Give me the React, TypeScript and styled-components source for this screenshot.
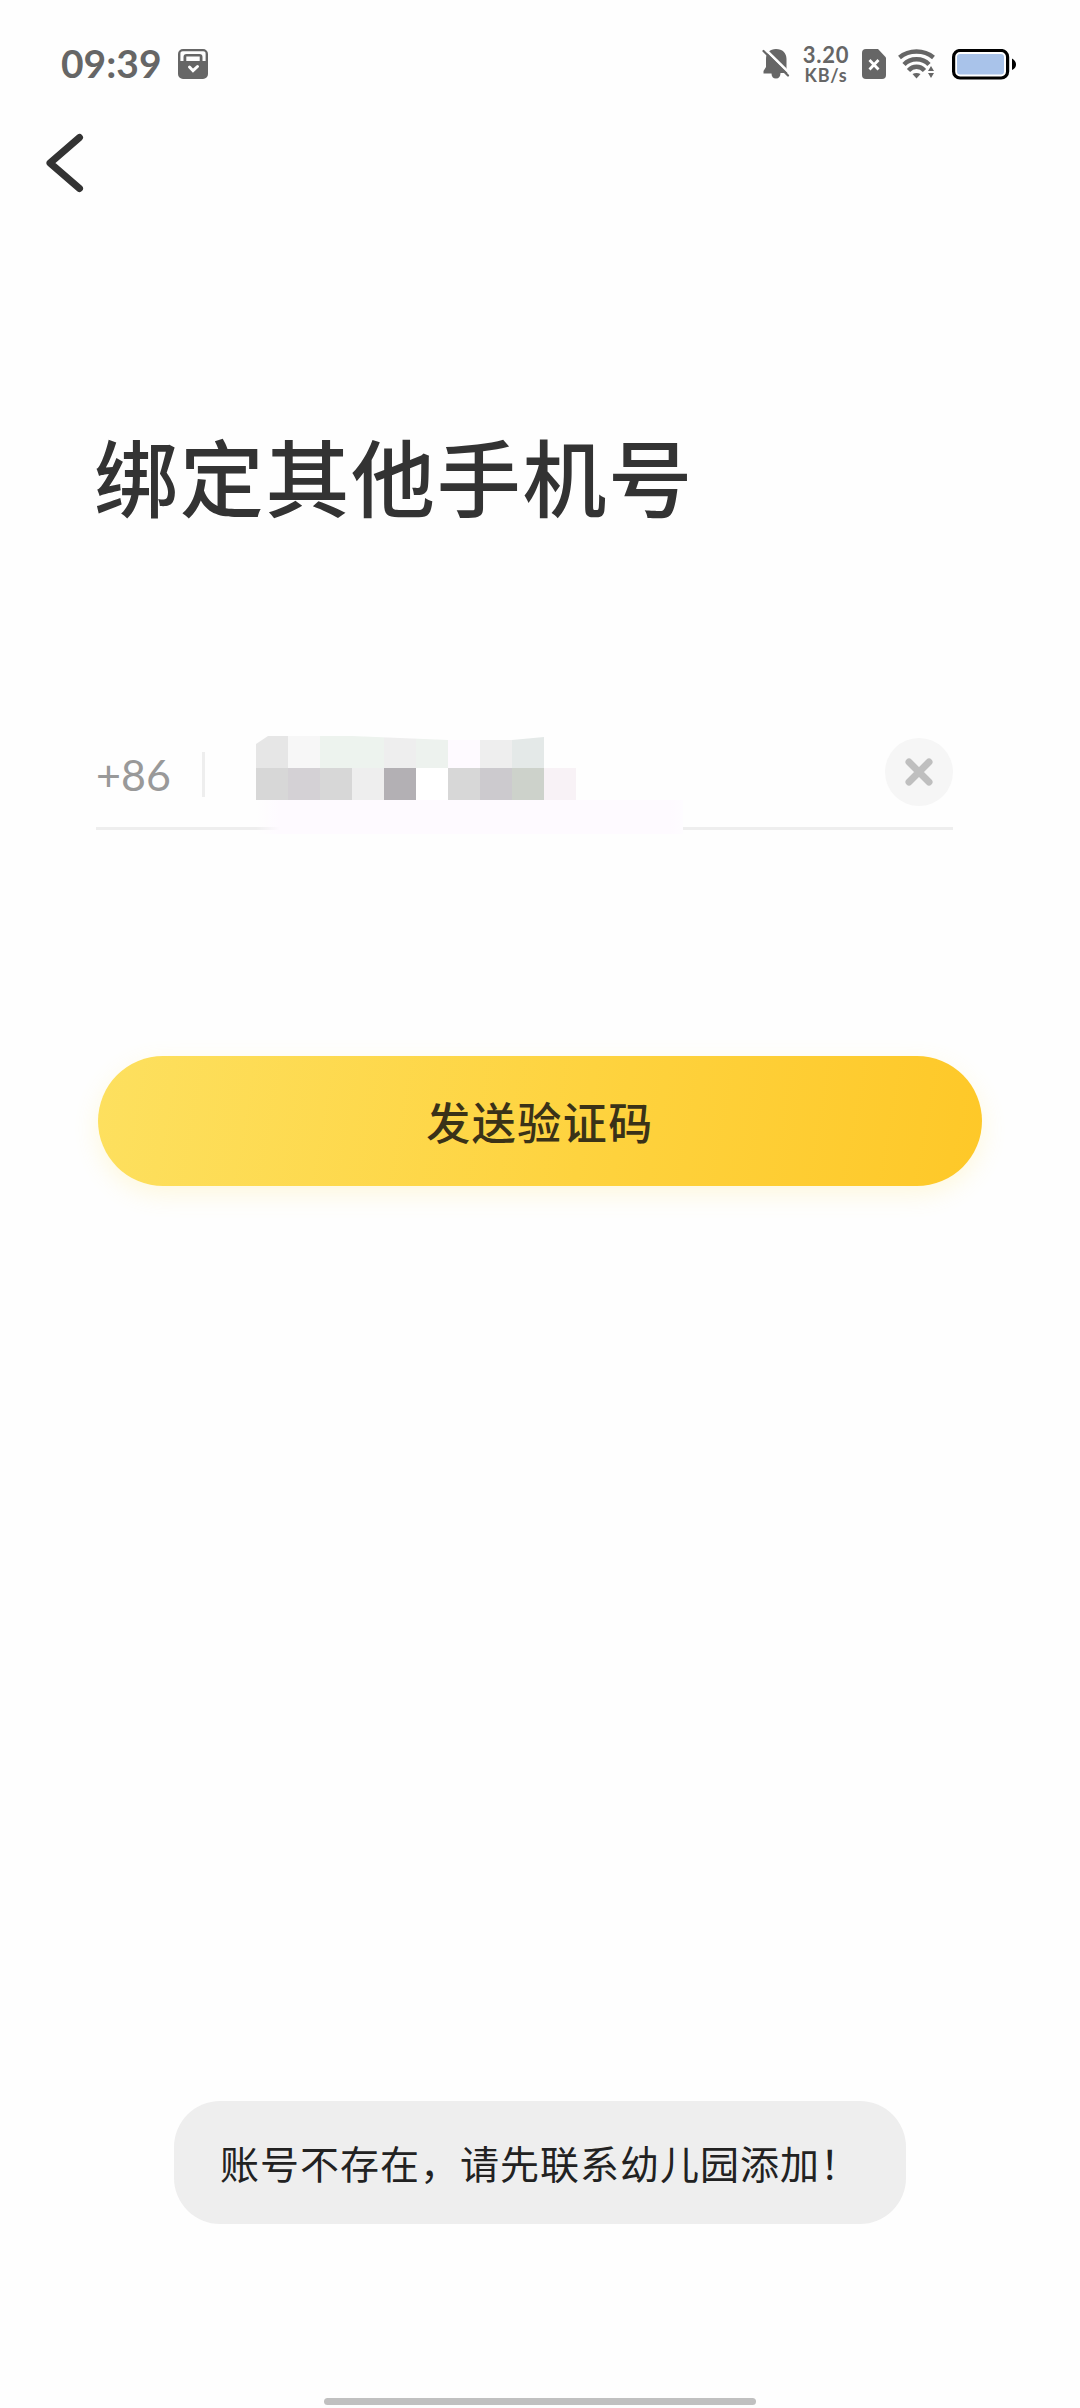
import React from "react";
import styled, { createGlobalStyle } from "styled-components";

const Global = createGlobalStyle`
  html, body { margin: 0; padding: 0; background: #fefefe; }
  * { box-sizing: border-box; }
  svg { display: block; flex: none; }
`;

const cjk = `"Noto Sans CJK SC", "Noto Sans", sans-serif`;
const latin = `Lato, "Noto Sans", sans-serif`;

const Screen = styled.div`
  width: 1080px;
  height: 2408px;
  display: flex;
  flex-direction: column;
  background: #fefefe;
  font-family: ${cjk};
  overflow: hidden;
`;

const StatusBar = styled.header`
  height: 128px;
  flex: none;
  display: flex;
  justify-content: space-between;
  align-items: center;
  padding: 0 63px 0 61px;
  color: #666;
`;

const StatusGroup = styled.div<{ $gap: number }>`
  display: flex;
  align-items: center;
  gap: ${(p) => p.$gap}px;
`;

const Clock = styled.span`
  font: 700 39px/48px ${latin};
  width: 101px;
  margin-top: -2px;
  white-space: nowrap;
`;

const NetSpeed = styled.div`
  display: flex;
  flex-direction: column;
  align-items: center;
  width: 48px;
  white-space: nowrap;
`;

const SpeedValue = styled.span`
  font: 700 22px/22px ${latin};
  letter-spacing: 0.8px;
`;

const SpeedUnit = styled.span`
  font: 700 18px/19px ${latin};
  letter-spacing: 0.8px;
`;

const NavBar = styled.nav`
  height: 70px;
  flex: none;
  display: flex;
  align-items: center;
  padding-left: 44px;
`;

const BackButton = styled.button`
  border: 0;
  padding: 0;
  background: none;
`;

const Title = styled.h1`
  margin: 215px 0 0 94px;
  font-size: 84px;
  line-height: 124px;
  font-weight: 500;
  letter-spacing: 1.7px;
  color: #333;
  white-space: nowrap;
`;

const PhoneRow = styled.div`
  margin: 195px 127px 0 96px;
  height: 98px;
  flex: none;
  display: flex;
  border-bottom: 3px solid #eee;
`;

const CountryCode = styled.span`
  width: 106px;
  padding-top: 17px;
  font: 400 43px/52px ${latin};
  color: #999;
`;

const Divider = styled.span`
  width: 3px;
  height: 45px;
  margin-top: 20px;
  background: #eee;
`;

const Mosaic = styled.div`
  margin: 4px 0 0 51px;
  width: 427px;
  height: 98px;
  display: flex;
  flex-direction: column;
`;

const MosaicRow = styled.div<{ $clip?: string }>`
  display: flex;
  height: 32px;
  clip-path: ${(p) => p.$clip || "none"};
`;

const Cell = styled.span<{ $color: string }>`
  width: 32px;
  height: 32px;
  background: ${(p) => p.$color};
`;

const MosaicTail = styled.div`
  height: 34px;
  background: linear-gradient(90deg, rgba(254, 250, 255, 0) 0, #fefaff 24px, #fefaff 414px, #fefcff);
`;

const ClearButton = styled.button`
  margin: 6px 0 0 auto;
  width: 68px;
  height: 68px;
  border: 0;
  padding: 0;
  border-radius: 50%;
  background: #f6f6f6;
  display: flex;
  align-items: center;
  justify-content: center;
`;

const SendButton = styled.button`
  margin: 226px 98px 0;
  height: 130px;
  flex: none;
  border: 0;
  padding: 0;
  border-radius: 65px;
  background: linear-gradient(100deg, #fde05f 0%, #fed33f 55%, #fec828 100%);
  box-shadow: 0 8px 24px rgba(254, 224, 90, 0.2);
  font: 500 44px/64px ${cjk};
  letter-spacing: 1.5px;
  color: #3a3218;
`;

const Toast = styled.div`
  margin: auto 174px 0;
  height: 123px;
  flex: none;
  display: flex;
  align-items: center;
  padding: 0 0 2px 46px;
  border-radius: 46px;
  background: #eee;
  font-size: 39px;
  line-height: 58px;
  letter-spacing: 1px;
  color: #222;
  white-space: nowrap;
`;

const HomeBar = styled.div`
  width: 432px;
  height: 7px;
  flex: none;
  margin: 174px auto 3px;
  border-radius: 4px;
  background: #c0c0c0;
`;

const BatterySlot = styled.div`
  margin-left: 4px;
`;

const upper = ["#e6e6e6", "#f7f7f7", "#edf3ee", "#edf3ee", "#eeeeee", "#edf2ee", "#fefaff", "#eeeeee", "#e4e9e8"];
const lower = ["#d7d7d7", "#d4d1d5", "#d7d7d7", "#eeeeee", "#b3b0b4", "#ffffff", "#d7d7d7", "#cccace", "#cdd2cb", "#f8f2f6"];

const BagIcon = () => (
  <svg width="30" height="30" viewBox="0 0 30 30">
    <path fill="#666" fillRule="evenodd" d="M5 0H25A5 5 0 0 1 30 5V25A5 5 0 0 1 25 30H5A5 5 0 0 1 0 25V5A5 5 0 0 1 5 0ZM5 2.3A2.5 2.5 0 0 0 2.4 5V12H5.5V8A3 3 0 0 1 8.5 5H21.5A3 3 0 0 1 24.5 8V12H27.6V5A2.5 2.5 0 0 0 25 2.3ZM8.3 7.5V12H21.7V7.5Z" />
    <path d="M11.5 18L15 21.7L19.5 17.5" fill="none" stroke="#fff" strokeWidth="3" strokeLinecap="round" />
  </svg>
);

const MutedBell = () => (
  <svg width="28" height="32" viewBox="0 0 28 32">
    <path fill="#666" d="M14 1C20.500 1 24.500 5 24.500 11V20L26 25H18.500C18.500 28.500 17 30.500 14 30.500S9.500 28.500 9.500 25.500H1.500V23L4 19V11C4 5 8 1 14 1Z" />
    <path d="M2.500 0.500L28.500 26" stroke="#fefefe" strokeWidth="2.600" />
    <path d="M1.500 3L26 27.500" stroke="#666" strokeWidth="2.200" strokeLinecap="round" />
  </svg>
);

const SimIcon = () => (
  <svg width="24" height="30" viewBox="0 0 24 30">
    <path fill="#666" d="M4 0H16L24 8.500V26A4 4 0 0 1 20 30H4A4 4 0 0 1 0 26V4A4 4 0 0 1 4 0Z" />
    <path d="M7.500 11L16.500 20.500M16.500 11L7.500 20.500" stroke="#fff" strokeWidth="2.800" />
  </svg>
);

const WifiIcon = () => (
  <svg width="38" height="30" viewBox="0 0 38 30">
    <g fill="none" stroke="#666" strokeWidth="4.400">
      <path d="M1.500 8.500C11 0.500 26 0.500 35.500 8.500" />
      <path d="M6 15.500C12.500 8.500 24.500 8.500 31 15.500" />
      <path d="M10.500 21.500C15 16.500 22 16.500 26.500 21.500" />
    </g>
    <path fill="#666" d="M14.500 25Q18.500 23 22.500 25L18.500 29.500Z" />
    <path fill="#666" stroke="#fefefe" strokeWidth="1.500" paintOrder="stroke" d="M30 22L33 17L36 22ZM30 24H36L33 29Z" />
  </svg>
);

const BatteryIcon = () => (
  <svg width="65" height="31" viewBox="0 0 65 31">
    <rect x="1.600" y="1.500" width="54" height="27.500" rx="6.500" fill="#fff" stroke="#000" strokeWidth="3.200" />
    <rect x="5" y="5" width="47" height="20.500" rx="3" fill="#a9c3ea" />
    <path fill="#000" d="M60 9.500Q64 12 64 15.500T60 21Z" />
  </svg>
);

export default function App() {
  return (
    <Screen>
      <Global />
      <StatusBar>
        <StatusGroup $gap={16}>
          <Clock>09:39</Clock>
          <BagIcon />
        </StatusGroup>
        <StatusGroup $gap={12}>
          <MutedBell />
          <NetSpeed>
            <SpeedValue>3.20</SpeedValue>
            <SpeedUnit>KB/s</SpeedUnit>
          </NetSpeed>
          <SimIcon />
          <WifiIcon />
          <BatterySlot>
            <BatteryIcon />
          </BatterySlot>
        </StatusGroup>
      </StatusBar>
      <NavBar>
        <BackButton aria-label="返回">
          <svg width="42" height="60" viewBox="0 0 42 60">
            <path d="M35.500 4.500L6 30L35.500 55.500" fill="none" stroke="#333" strokeWidth="7" strokeLinecap="round" strokeLinejoin="round" />
          </svg>
        </BackButton>
      </NavBar>
      <Title>绑定其他手机号</Title>
      <PhoneRow>
        <CountryCode>+86</CountryCode>
        <Divider />
        <Mosaic>
          <MosaicRow $clip="polygon(0 8px, 12px 0, 96px 0, 192px 4px, 224px 4px, 256px 4px, 288px 1px, 288px 100%, 0 100%)">
            {upper.map((c, i) => <Cell key={i} $color={c} />)}
          </MosaicRow>
          <MosaicRow>
            {lower.map((c, i) => <Cell key={i} $color={c} />)}
          </MosaicRow>
          <MosaicTail />
        </Mosaic>
        <ClearButton aria-label="清除">
          <svg width="28" height="28" viewBox="0 0 28 28">
            <path d="M4 4L24 24M24 4L4 24" stroke="#bfbfbf" strokeWidth="7" strokeLinecap="round" />
          </svg>
        </ClearButton>
      </PhoneRow>
      <SendButton>发送验证码</SendButton>
      <Toast>账号不存在，请先联系幼儿园添加！</Toast>
      <HomeBar />
    </Screen>
  );
}
